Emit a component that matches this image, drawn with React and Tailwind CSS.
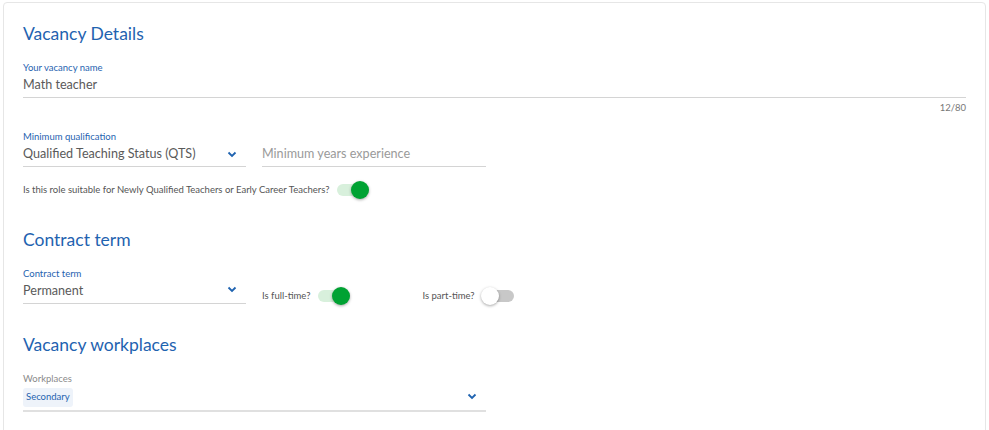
import React from 'react'

const Chevron = () => (
  <svg width="10" height="7" viewBox="0 0 10 7" className="shrink-0">
    <path d="M1.5 1.5 L5 5 L8.5 1.5" fill="none" stroke="#1f63b0" strokeWidth="1.8" />
  </svg>
)

function Toggle({ on }) {
  return (
    <div className="relative w-[32px] h-[20px] flex items-center">
      <div className={`w-[32px] h-[12px] rounded-full ${on ? 'bg-[#d8f0dc]' : 'bg-[#c8c8c8]'}`} />
      <div
        className={`absolute top-[1px] w-[18px] h-[18px] rounded-full shadow-[0_1px_3px_rgba(0,0,0,0.35)] ${on ? 'left-[14px] bg-[#00a233]' : 'left-[-1px] bg-white'}`}
      />
    </div>
  )
}

function Label({ children, gray }) {
  return <div className={`text-[9.5px] leading-[12px] ${gray ? 'text-[#8a8a8a]' : 'text-[#1f63b0]'}`}>{children}</div>
}

export default function App() {
  return (
    <div className="w-[989px] h-[430px] bg-white overflow-hidden pt-[2px] px-[3px] font-['Lato',sans-serif]">
      <div className="h-[460px] border border-[#e6e6e6] rounded-[4px] px-[19px] pt-[20px]">
        <h2 className="text-[17.5px] leading-[22px] text-[#1f63b0]">Vacancy Details</h2>

        <div className="mt-[17px] w-[943px]">
          <Label>Your vacancy name</Label>
          <div className="border-b border-[#d4d4d4] h-[24px] pt-[3px] text-[12.6px] leading-[16px] text-[#5a5a5a]">Math teacher</div>
          <div className="text-right text-[9.5px] leading-[12px] text-[#777] mt-[4px]">12/80</div>
        </div>

        <div className="mt-[17px] flex items-end gap-[16px]">
          <div className="w-[223px]">
            <Label>Minimum qualification</Label>
            <div className="border-b border-[#d4d4d4] h-[24px] pt-[3px] pr-[9px] flex items-start justify-between text-[12.6px] leading-[16px] text-[#5a5a5a]">
              <span>Qualified Teaching Status (QTS)</span>
              <span className="mt-[5px]"><Chevron /></span>
            </div>
          </div>
          <div className="w-[224px] border-b border-[#d4d4d4] h-[24px] pt-[3px] text-[12.6px] leading-[16px] text-[#9a9a9a]">Minimum years experience</div>
        </div>

        <div className="mt-[13px] flex items-center gap-[8px]">
          <span className="text-[9.5px] text-[#555]">Is this role suitable for Newly Qualified Teachers or Early Career Teachers?</span>
          <Toggle on />
        </div>

        <h2 className="mt-[29px] text-[17.5px] leading-[22px] text-[#1f63b0]">Contract term</h2>

        <div className="mt-[17px] flex items-end">
          <div className="w-[223px]">
            <Label>Contract term</Label>
            <div className="border-b border-[#d4d4d4] h-[24px] pt-[3px] pr-[9px] flex items-start justify-between text-[12.6px] leading-[16px] text-[#5a5a5a]">
              <span>Permanent</span>
              <span className="mt-[3px]"><Chevron /></span>
            </div>
          </div>
          <div className="ml-[16px] flex items-center gap-[8px] mb-[-2px]">
            <span className="text-[9.5px] text-[#555]">Is full-time?</span>
            <Toggle on />
          </div>
          <div className="ml-[72px] flex items-center gap-[7px] mb-[-2px]">
            <span className="text-[9.5px] text-[#555]">Is part-time?</span>
            <Toggle />
          </div>
        </div>

        <h2 className="mt-[30px] text-[17.5px] leading-[22px] text-[#1f63b0]">Vacancy workplaces</h2>

        <div className="mt-[17px] w-[463px]">
          <Label gray>Workplaces</Label>
          <div className="border-b-2 border-[#e0e0e0] h-[27px] pt-[3px] pr-[9px] flex items-start justify-between">
            <span className="bg-[#eef3fa] rounded-[3px] px-[3px] h-[19px] flex items-center text-[9.5px] text-[#1f63b0]">Secondary</span>
            <span className="mt-[5px]"><Chevron /></span>
          </div>
        </div>
      </div>
    </div>
  )
}
